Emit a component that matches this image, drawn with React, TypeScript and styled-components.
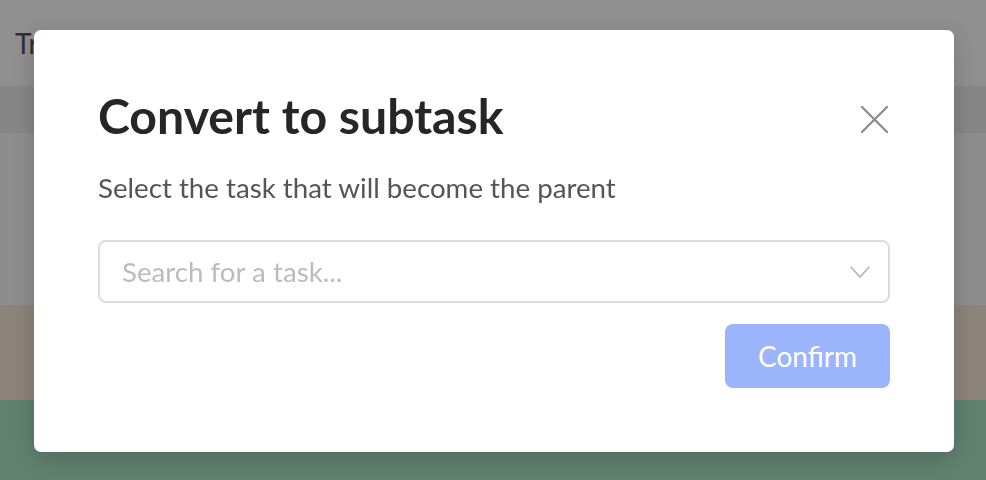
import React from "react";
import styled, { createGlobalStyle } from "styled-components";

const Global = createGlobalStyle`
  html, body { margin: 0; padding: 0; }
  body { font-family: Lato, "Open Sans", sans-serif; overflow: hidden; }
  * { box-sizing: border-box; }
`;

const Page = styled.div`
  width: 986px;
  height: 480px;
  display: flex;
  flex-direction: column;
  background: #ffffff;
`;

const PageHeader = styled.header`
  height: 86px;
  display: flex;
  align-items: center;
  padding-left: 15px;
  font-size: 28px;
  color: #555;
`;

const Band = styled.div<{ $h: number; $bg: string }>`
  height: ${(p) => p.$h}px;
  background: ${(p) => p.$bg};
  flex-shrink: 0;
`;

const Overlay = styled.div`
  position: fixed;
  inset: 0;
  padding: 2px 0 0 2px;
  background: rgba(0, 0, 0, 0.44);
  display: flex;
  align-items: center;
  justify-content: center;
`;

const Modal = styled.div`
  width: 920px;
  height: 422px;
  background: #fff;
  border-radius: 7px;
  box-shadow: 0 6px 24px rgba(0, 0, 0, 0.18);
  padding: 57px 64px 0;
  display: flex;
  flex-direction: column;
`;

const HeaderRow = styled.div`
  display: flex;
  align-items: flex-start;
  justify-content: space-between;
`;

const Title = styled.h2`
  margin: 0;
  font-size: 48.2px;
  line-height: 1.2;
  font-weight: 700;
  color: #262626;
`;

const CloseButton = styled.button`
  border: none;
  background: none;
  padding: 0;
  width: 27px;
  height: 27px;
  margin: 19px 2px 0 0;
  display: flex;
  align-items: center;
  justify-content: center;
  cursor: pointer;
`;

const Subtitle = styled.p`
  margin: 26px 0 0;
  font-size: 27.7px;
  line-height: 1.2;
  color: #555;
`;

const Select = styled.div`
  margin-top: 36px;
  height: 63px;
  border: 2px solid #dcdcdc;
  border-radius: 8px;
  display: flex;
  align-items: center;
  justify-content: space-between;
  padding: 0 17px 0 22px;
`;

const Placeholder = styled.span`
  font-size: 27.7px;
  color: #bcbcbc;
`;

const Footer = styled.div`
  margin-top: 21px;
  display: flex;
  justify-content: flex-end;
`;

const ConfirmButton = styled.button`
  width: 165px;
  height: 64px;
  border: none;
  border-radius: 8px;
  background: #9bb4fb;
  color: #fff;
  font-family: Lato, sans-serif;
  font-size: 28px;
`;

export default function App() {
  return (
    <>
      <Global />
      <Page>
        <PageHeader>Tracker</PageHeader>
        <Band $h={47} $bg="#eeeeee" />
        <Band $h={172} $bg="#fcfcfc" />
        <Band $h={95} $bg="#f9ebda" />
        <Band $h={80} $bg="#abe5c8" />
      </Page>
      <Overlay>
        <Modal>
          <HeaderRow>
            <Title>Convert to subtask</Title>
            <CloseButton aria-label="Close">
              <svg width="27" height="27" viewBox="0 0 27 27">
                <path d="M1 1 L26 26 M26 1 L1 26" stroke="#8a8a8a" strokeWidth="2.2" strokeLinecap="round" />
              </svg>
            </CloseButton>
          </HeaderRow>
          <Subtitle>Select the task that will become the parent</Subtitle>
          <Select>
            <Placeholder>Search for a task...</Placeholder>
            <svg width="22" height="14" viewBox="0 0 22 14">
              <path d="M1.5 1.5 L11 12 L20.5 1.5" fill="none" stroke="#b5b5b5" strokeWidth="1.6" />
            </svg>
          </Select>
          <Footer>
            <ConfirmButton>Confirm</ConfirmButton>
          </Footer>
        </Modal>
      </Overlay>
    </>
  );
}
